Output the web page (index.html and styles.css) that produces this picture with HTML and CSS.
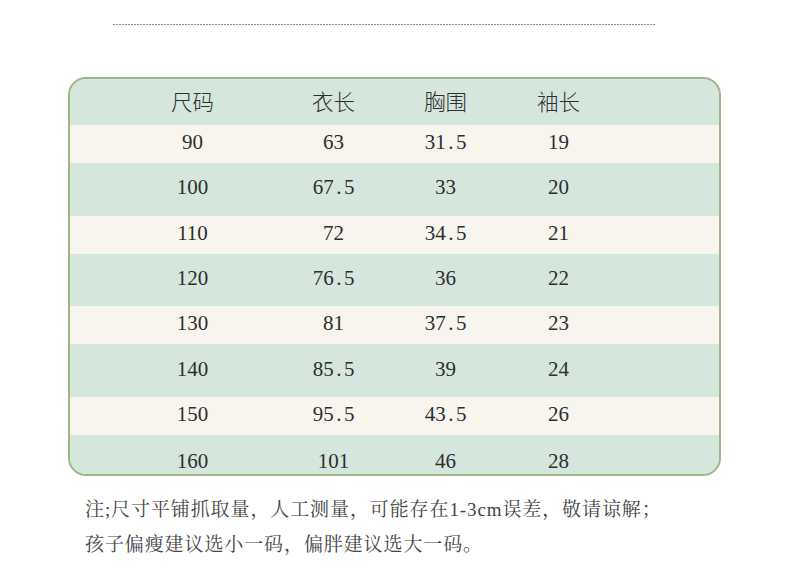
FILE: index.html
```html
<!DOCTYPE html>
<html lang="zh-CN">
<head>
<meta charset="utf-8">
<title>尺码表</title>
<link rel="stylesheet" href="styles.css">
</head>
<body>
<div class="divider"></div>
<div class="size-table">
  <div class="row head">
    <div class="cell cjk">尺码</div><div class="cell cjk">衣长</div><div class="cell cjk">胸围</div><div class="cell cjk">袖长</div>
  </div>
  <div class="row">
    <div class="cell">90</div><div class="cell">63</div><div class="cell">31<span class="dot">.</span>5</div><div class="cell">19</div>
  </div>
  <div class="row">
    <div class="cell">100</div><div class="cell">67<span class="dot">.</span>5</div><div class="cell">33</div><div class="cell">20</div>
  </div>
  <div class="row">
    <div class="cell">110</div><div class="cell">72</div><div class="cell">34<span class="dot">.</span>5</div><div class="cell">21</div>
  </div>
  <div class="row">
    <div class="cell">120</div><div class="cell">76<span class="dot">.</span>5</div><div class="cell">36</div><div class="cell">22</div>
  </div>
  <div class="row">
    <div class="cell">130</div><div class="cell">81</div><div class="cell">37<span class="dot">.</span>5</div><div class="cell">23</div>
  </div>
  <div class="row">
    <div class="cell">140</div><div class="cell">85<span class="dot">.</span>5</div><div class="cell">39</div><div class="cell">24</div>
  </div>
  <div class="row">
    <div class="cell">150</div><div class="cell">95<span class="dot">.</span>5</div><div class="cell">43<span class="dot">.</span>5</div><div class="cell">26</div>
  </div>
  <div class="row last">
    <div class="cell">160</div><div class="cell">101</div><div class="cell">46</div><div class="cell">28</div>
  </div>
</div>
<div class="note">
  <p>注;尺寸平铺抓取量，人工测量，可能存在1-3cm误差，敬请谅解；</p>
  <p>孩子偏瘦建议选小一码，偏胖建议选大一码。</p>
</div>
</body>
</html>
```

FILE: styles.css
```css
html, body {
  margin: 0;
  padding: 0;
  background: #ffffff;
}

body {
  width: 790px;
  height: 574px;
  overflow: hidden;
  font-family: "Liberation Serif", "Noto Serif CJK SC", "Noto Sans CJK SC", serif;
  color: #2e2e2e;
}

.divider {
  margin: 24px 0 0 113px;
  width: 542px;
  height: 1px;
  background: repeating-linear-gradient(90deg, #8a8a8a 0 2px, transparent 2px 3px);
}

.size-table {
  box-sizing: border-box;
  margin: 52px 0 0 68px;
  width: 653px;
  border: 2px solid #a3b38a;
  border-radius: 18px;
  overflow: hidden;
  background: #d5e7dd;
}

.row {
  box-sizing: border-box;
  display: grid;
  grid-template-columns: 141px 141px 83px 143px;
  padding-left: 52px;
  align-items: center;
  height: 52.3px;
  padding-bottom: 4px;
  background: #d5e7dd;
}

.row:nth-child(even) {
  background: #f8f5ee;
  height: 38.3px;
}

.row.head {
  height: 46px;
  padding-bottom: 2px;
}

.row.last {
  height: 38.9px;
  padding-bottom: 0;
  padding-top: 13px;
}

.cell {
  text-align: center;
  font-size: 21px;
  line-height: 24px;
  white-space: nowrap;
}

.cell.cjk {
  font-family: "Noto Sans CJK SC", sans-serif;
  font-weight: 300;
  font-size: 21.5px;
}

.dot {
  margin: 0 2.5px;
}

.note {
  margin: 16px 0 0 85px;
  color: #444444;
  font-size: 19px;
  line-height: 35px;
  letter-spacing: 0.9px;
}

.note p {
  margin: 0;
  white-space: nowrap;
}
```
